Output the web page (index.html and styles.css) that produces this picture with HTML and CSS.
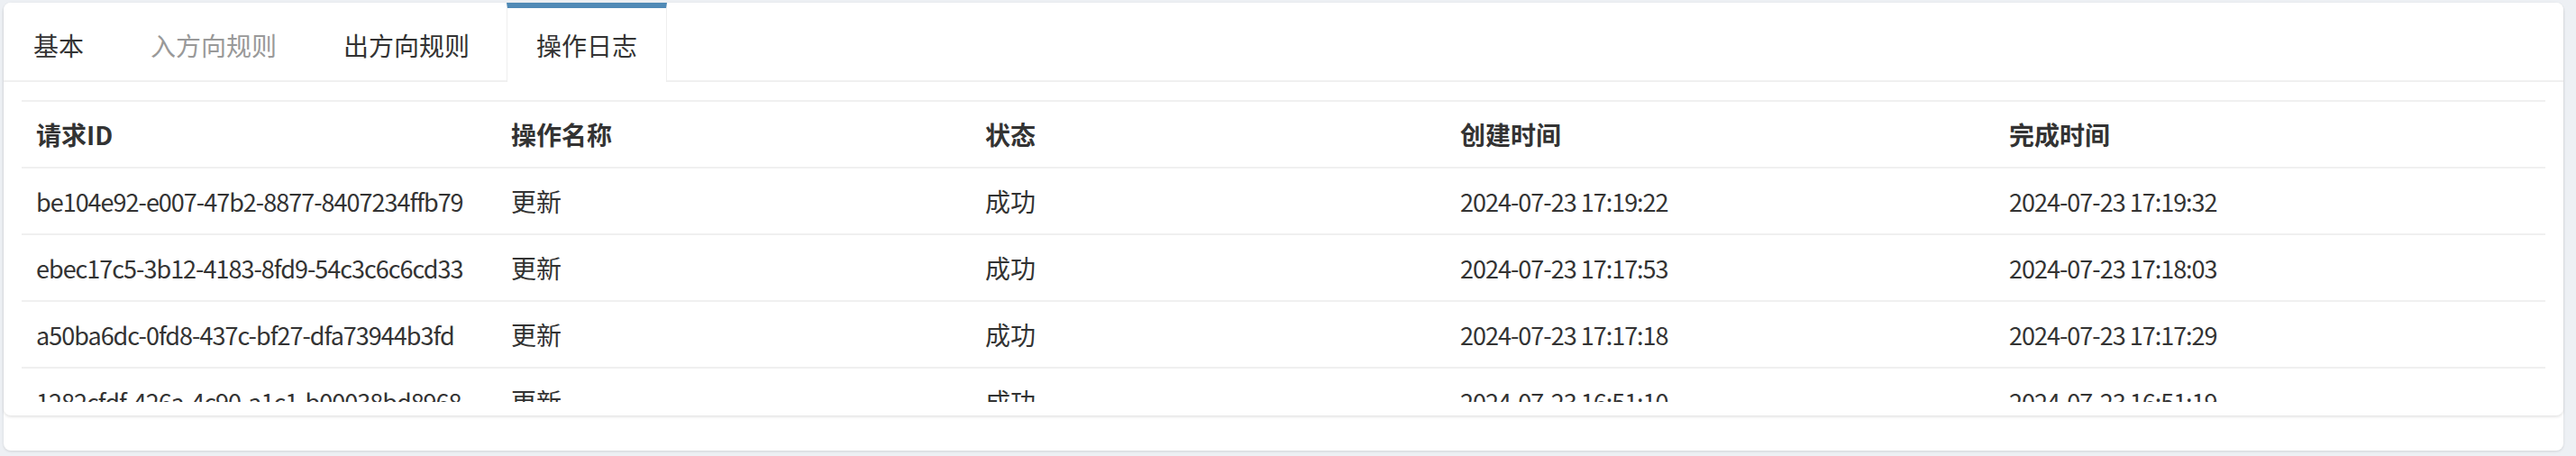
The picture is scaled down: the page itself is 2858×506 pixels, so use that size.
FILE: index.html
```html
<!DOCTYPE html>
<html lang="zh-CN">
<head>
<meta charset="utf-8">
<title>操作日志</title>
<link rel="stylesheet" href="styles.css">
</head>
<body>
<div class="outer">
  <div class="panel">
    <div class="tabs">
      <div class="tab">基本</div>
      <div class="tab disabled">入方向规则</div>
      <div class="tab">出方向规则</div>
      <div class="tab active">操作日志</div>
    </div>
    <div class="content">
      <div class="scroller">
        <table class="log">
          <colgroup>
            <col class="c1"><col class="c2"><col class="c3"><col class="c4"><col>
          </colgroup>
          <thead>
            <tr><th>请求ID</th><th>操作名称</th><th>状态</th><th>创建时间</th><th>完成时间</th></tr>
          </thead>
          <tbody>
            <tr><td class="latin">be104e92-e007-47b2-8877-8407234ffb79</td><td>更新</td><td>成功</td><td class="latin">2024-07-23 17:19:22</td><td class="latin">2024-07-23 17:19:32</td></tr>
            <tr><td class="latin">ebec17c5-3b12-4183-8fd9-54c3c6c6cd33</td><td>更新</td><td>成功</td><td class="latin">2024-07-23 17:17:53</td><td class="latin">2024-07-23 17:18:03</td></tr>
            <tr><td class="latin">a50ba6dc-0fd8-437c-bf27-dfa73944b3fd</td><td>更新</td><td>成功</td><td class="latin">2024-07-23 17:17:18</td><td class="latin">2024-07-23 17:17:29</td></tr>
            <tr><td class="latin">1282cfdf-426a-4c90-a1c1-b00038bd8968</td><td>更新</td><td>成功</td><td class="latin">2024-07-23 16:51:10</td><td class="latin">2024-07-23 16:51:19</td></tr>
          </tbody>
        </table>
      </div>
    </div>
  </div>
</div>
</body>
</html>
```

FILE: styles.css
```css
html, body {
  margin: 0;
  padding: 0;
}
body {
  background: #edf0f4;
  font-family: "Noto Sans CJK SC", "Noto Sans", sans-serif;
  color: #333;
  padding: 3px 14px 0 4px;
  height: 506px;
  box-sizing: border-box;
  overflow: hidden;
}
.outer {
  background: #fff;
  height: 497px;
  border-radius: 8px;
  box-shadow: 0 1px 3px rgba(0, 0, 0, 0.12);
}
.panel {
  background: #fff;
  height: 458px;
  border-radius: 8px;
  box-shadow: 0 2px 3px rgba(0, 0, 0, 0.1);
  display: flex;
  flex-direction: column;
}
.tabs {
  display: flex;
  gap: 8px;
  border-bottom: 2px solid #f0f0f0;
  height: 86px;
}
.tab {
  box-sizing: border-box;
  height: 88px;
  padding: 0 32px;
  border-top: 6px solid transparent;
  border-left: 1px solid transparent;
  border-right: 1px solid transparent;
  display: flex;
  align-items: center;
  font-size: 28px;
  color: #333;
  white-space: nowrap;
}
.tab.disabled {
  color: #999;
}
.tab.active {
  border-top-color: #508ab6;
  border-left-color: #eeeeee;
  border-right-color: #eeeeee;
  background: #fff;
}
.content {
  padding: 20px 20px 15px 20px;
  flex: 1;
  min-height: 0;
  display: flex;
}
.scroller {
  flex: 1;
  overflow: hidden;
}
.log {
  width: 100%;
  border-collapse: collapse;
  table-layout: fixed;
  font-size: 28px;
}
.c1 { width: 527px; }
.c2 { width: 526px; }
.c3 { width: 527px; }
.c4 { width: 609px; }
.log th,
.log td {
  text-align: left;
  padding: 0 16px;
  white-space: nowrap;
  border-top: 2px solid #f0f0f0;
  border-bottom: 2px solid #f0f0f0;
}
.log th {
  height: 72px;
  font-weight: 700;
  color: #333;
}
.log td {
  height: 72px;
  color: #333;
}
.log td.latin {
  font-size: 27px;
  letter-spacing: -1px;
}
```
